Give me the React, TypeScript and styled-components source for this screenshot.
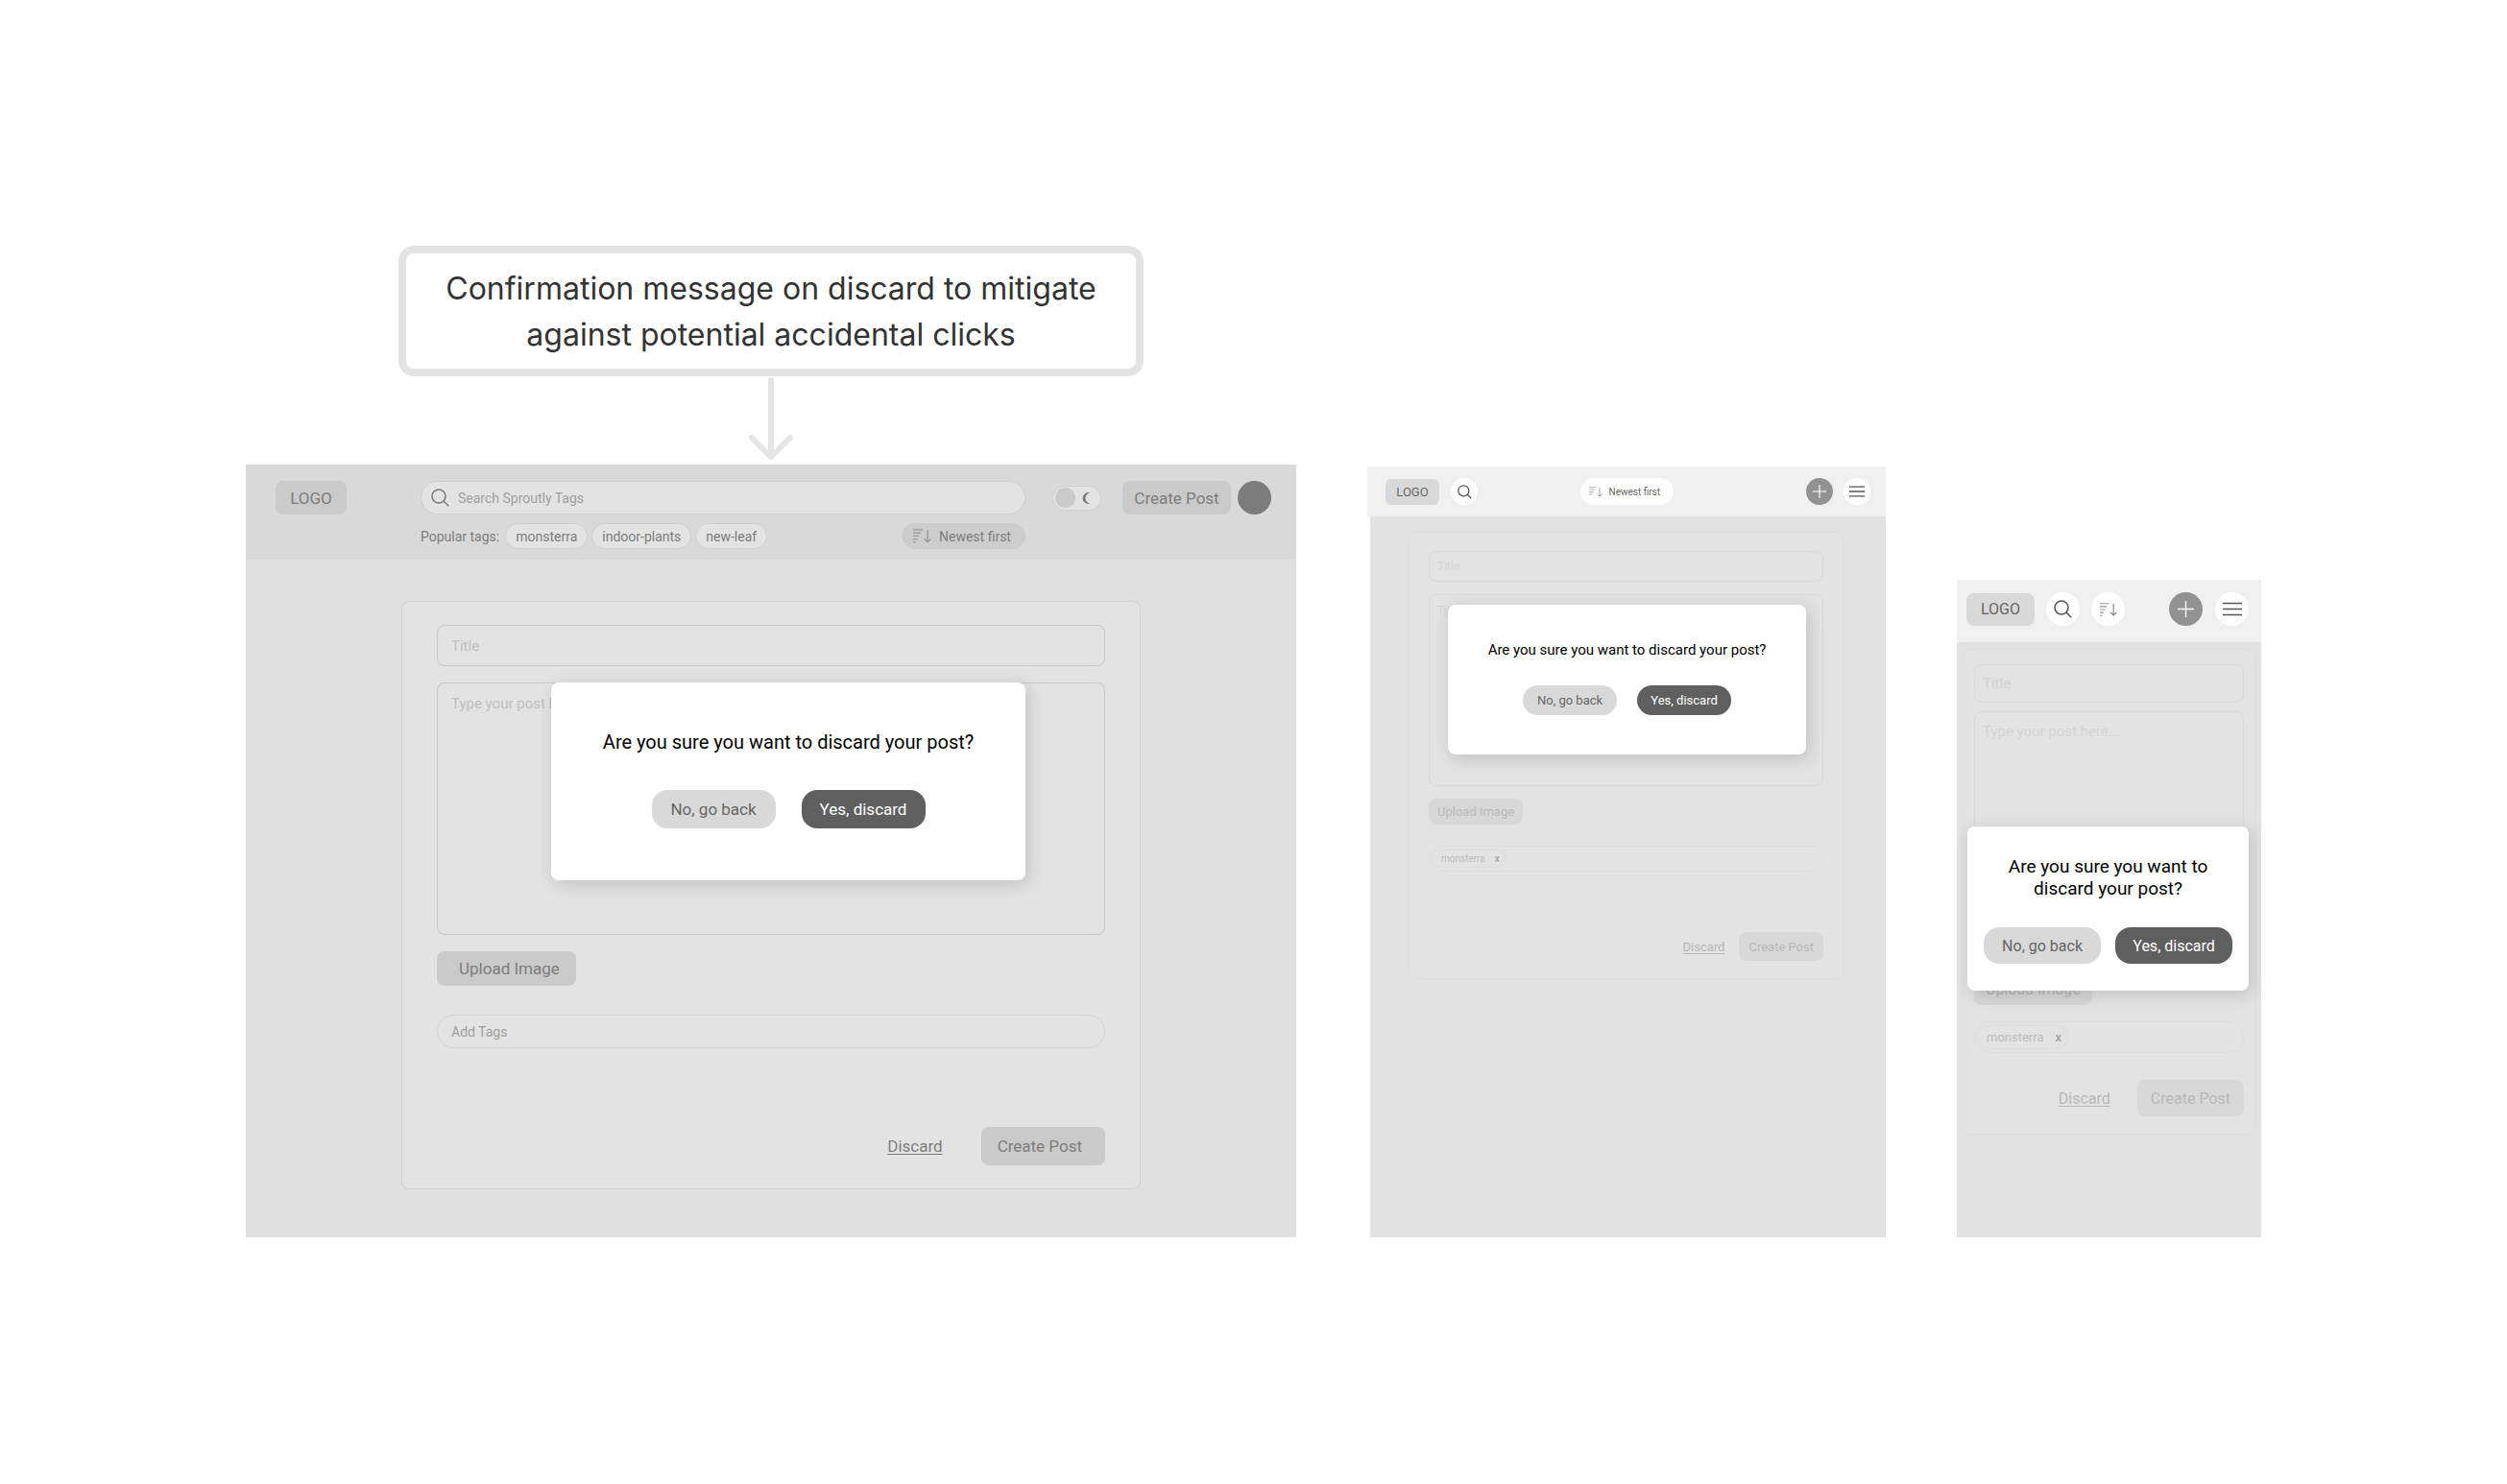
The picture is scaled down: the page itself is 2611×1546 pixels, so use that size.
import React, { useId } from 'react';
import styled, { createGlobalStyle, css, ThemeProvider } from 'styled-components';

/* ---------- theme ---------- */

const base = {
  ink: '#7d7d7d',
  hint: '#bfbfbf',
  tagHint: '#9f9f9f',
  line: '#c9c9c9',
  softLine: '#d3d3d3',
  fill: '#cacaca',
  surface: '#e3e3e3',
  page: '#e0e0e0',
};

const faded = {
  ink: '#b8b8b8',
  hint: '#d4d4d4',
  tagHint: '#bcbcbc',
  line: '#d9d9d9',
  softLine: '#dddddd',
  fill: '#d8d8d8',
  surface: '#e3e3e3',
  page: '#e2e2e2',
};

const desktop = {
  colors: base,
  body: '43px 162px 50px',
  bodyOffset: 0,
  card: '24px 36px',
  radius: 8,
  field: { height: 43, pad: 14, font: 15 },
  area: { height: 263, pad: 12, gap: 17 },
  upload: { height: 36, pad: '0 17px 0 23px', gap: 17 },
  tags: { height: 35, pad: 14, font: 14, gap: 30, chipGap: 10 },
  actions: { height: 40, gap: 82, space: 40, pad: '0 24px 0 17px' },
  button: 17,
  dialog: { top: 227, left: '29.1%', right: '25.8%', pad: '50px 0 54px', font: 20, line: 24, gap: 38, space: 27 },
  choice: { width: 129, height: 40, font: 17 },
};

const tablet = {
  colors: faded,
  body: '16px 44px 269px 40px',
  bodyOffset: 3,
  card: '19px 20px 18px',
  radius: 6,
  field: { height: 32, pad: 8, font: 12 },
  area: { height: 200, pad: 9, gap: 13 },
  upload: { height: 27, pad: '0 9px', gap: 13 },
  tags: { height: 27, pad: 2, font: 10, gap: 22, chipGap: 10 },
  actions: { height: 30, gap: 63, space: 15, pad: '0 10px' },
  button: 13,
  dialog: { top: 144, left: '15.5%', right: '15.3%', pad: '38px 0 41px', font: 15, line: 18, gap: 28, space: 21 },
  choice: { width: 98, height: 31, font: 13 },
};

const mobile = {
  colors: faded,
  body: '7px 6px 107px',
  bodyOffset: 0,
  card: '15px 11px 18px',
  radius: 8,
  field: { height: 40, pad: 8, font: 15 },
  area: { height: 263, pad: 11, gap: 9 },
  upload: { height: 34, pad: '0 12px', gap: 9 },
  tags: { height: 33, pad: 2, font: 13, gap: 17, chipGap: 12 },
  actions: { height: 38, gap: 28, space: 28, pad: '0 14px' },
  button: 16,
  dialog: { top: 257, left: '3.5%', right: '4.1%', pad: '30px 24px 28px', font: 19, line: 23, gap: 29, space: 15 },
  choice: { width: 122, height: 38, font: 16 },
};

type Device = typeof desktop;

declare module 'styled-components' {
  export interface DefaultTheme extends Device {}
}

/* ---------- board ---------- */

const GlobalStyle = createGlobalStyle`
  * { box-sizing: border-box; }
  body { margin: 0; background: #fff; font-family: Roboto, "Liberation Sans", sans-serif; }
  button, input, textarea { font-family: inherit; margin: 0; }
  button { cursor: pointer; white-space: nowrap; }
  svg { display: block; flex: none; }
`;

const Board = styled.main`
  display: grid;
  grid-template-columns: minmax(0, 1094fr) minmax(0, 540fr) minmax(0, 317fr);
  column-gap: 74px;
  align-items: end;
  padding: 256px 256px 257px;
`;

const Column = styled.div`
  display: flex;
  flex-direction: column;
  align-items: center;
`;

const Callout = styled.p`
  margin: 0;
  padding: 13px 32px 11px;
  width: 71%;
  border: 8px solid #e3e3e3;
  border-radius: 16px;
  color: #333;
  font: 400 32px/48px Inter, "Liberation Sans", sans-serif;
  text-align: center;
`;

const Arrow = styled.svg`
  margin: 1px 0 4px;
`;

const Frame = styled.section`
  position: relative;
  width: 100%;
`;

const Body = styled.div`
  margin-left: ${({ theme }) => theme.bodyOffset}px;
  padding: ${({ theme }) => theme.body};
  background: ${({ theme }) => theme.colors.page};
`;

/* ---------- headers ---------- */

const DesktopHeader = styled.header`
  display: grid;
  grid-template-columns: 151fr 630fr 256fr;
  row-gap: 9px;
  padding: 17px 26px 11px 31px;
  background: #d9d9d9;
  color: #7d7d7d;
`;

const CompactHeader = styled.header<{ $pad: string }>`
  display: grid;
  grid-template-columns: 1fr auto 1fr;
  align-items: center;
  padding: ${({ $pad }) => $pad};
  background: #f0f0f0;
  color: #666;
`;

const Group = styled.div<{ $gap: number; $end?: boolean }>`
  display: flex;
  align-items: center;
  gap: ${({ $gap }) => $gap}px;
  padding-left: ${({ theme }) => theme.bodyOffset}px;
  justify-content: ${({ $end }) => ($end ? 'flex-end' : 'flex-start')};
`;

const Logo = styled.a<{ $w: number; $h: number; $font: number; $bg: string }>`
  display: flex;
  align-items: center;
  justify-content: center;
  width: ${({ $w }) => $w}px;
  height: ${({ $h }) => $h}px;
  border-radius: ${({ theme }) => theme.radius}px;
  background: ${({ $bg }) => $bg};
  color: inherit;
  font-size: ${({ $font }) => $font}px;
  text-decoration: none;
`;

const SearchBox = styled.label`
  display: flex;
  align-items: center;
  gap: 9px;
  height: 35px;
  padding: 0 10px;
  border: 1px solid #cecece;
  border-radius: 18px;
  background: #e3e3e3;
`;

const BareInput = styled.input<{ $font: number; $hint: string }>`
  flex: 1;
  min-width: 0;
  padding: 0;
  border: 0;
  outline: 0;
  background: none;
  font-size: ${({ $font }) => $font}px;
  color: inherit;
  &::placeholder { color: ${({ $hint }) => $hint}; opacity: 1; }
`;

const TagRow = styled.div`
  grid-column: 2;
  display: flex;
  align-items: center;
  gap: 4px;
  height: 27px;
  font-size: 14px;
`;

const TagLabel = styled.span`
  margin-right: 2px;
`;

const TagPill = styled.button`
  height: 27px;
  padding: 0 10px;
  border: 1px solid #d0d0d0;
  border-radius: 14px;
  background: #e3e3e3;
  color: inherit;
  font-size: 14px;
`;

const SortPill = styled.button<{ $compact?: boolean }>`
  display: flex;
  align-items: center;
  border: 0;
  color: inherit;
  ${({ $compact }) =>
    $compact
      ? css`gap: 7px; width: 97px; height: 28px; padding: 0 9px; border-radius: 14px; background: #fff; font-size: 10px;`
      : css`gap: 8px; width: 129px; height: 27px; padding: 0 12px; margin-left: auto; border-radius: 14px; background: #cdcdcd; font-size: 14px;`}
`;

const Switch = styled.label`
  display: flex;
  align-items: center;
  gap: 7px;
  width: 51px;
  height: 26px;
  margin-right: 22px;
  padding: 0 2px;
  border: 1px solid #d0d0d0;
  border-radius: 13px;
  background: #e3e3e3;
`;

const Knob = styled.input`
  appearance: none;
  width: 21px;
  height: 21px;
  margin: 0;
  border-radius: 50%;
  background: #cacaca;
`;

const HeaderButton = styled.button`
  width: 113px;
  height: 35px;
  margin-right: 7px;
  padding: 0;
  border: 0;
  border-radius: 8px;
  background: #cacaca;
  color: inherit;
  font-size: 17px;
`;

const Avatar = styled.button`
  width: 35px;
  height: 35px;
  padding: 0;
  border: 0;
  border-radius: 50%;
  background: #7c7c7c;
`;

const Round = styled.button<{ $size: number; $dark?: boolean }>`
  display: flex;
  align-items: center;
  justify-content: center;
  width: ${({ $size }) => $size}px;
  height: ${({ $size }) => $size}px;
  padding: 0;
  border: 0;
  border-radius: 50%;
  background: ${({ $dark }) => ($dark ? '#929292' : '#fff')};
  color: ${({ $dark }) => ($dark ? '#fff' : '#555')};
`;

/* ---------- post form ---------- */

const Card = styled.form`
  display: flex;
  flex-direction: column;
  padding: ${({ theme }) => theme.card};
  border: 1px solid ${({ theme }) => theme.colors.softLine};
  border-radius: 8px;
  background: ${({ theme }) => theme.colors.surface};
`;

const fieldStyle = css`
  width: 100%;
  border: 1px solid ${({ theme }) => theme.colors.line};
  border-radius: 8px;
  outline: 0;
  background: none;
  color: ${({ theme }) => theme.colors.ink};
  font-size: ${({ theme }) => theme.field.font}px;
  &::placeholder { color: ${({ theme }) => theme.colors.hint}; opacity: 1; }
`;

const TitleInput = styled.input`
  ${fieldStyle}
  height: ${({ theme }) => theme.field.height}px;
  padding: 0 ${({ theme }) => theme.field.pad}px;
`;

const PostArea = styled.textarea`
  ${fieldStyle}
  display: block;
  height: ${({ theme }) => theme.area.height}px;
  margin-top: ${({ theme }) => theme.area.gap}px;
  padding: ${({ theme }) => theme.area.pad}px ${({ theme }) => theme.field.pad}px;
  resize: none;
`;

const FormButton = styled.button`
  border: 0;
  border-radius: 8px;
  background: ${({ theme }) => theme.colors.fill};
  color: ${({ theme }) => theme.colors.ink};
  font-size: ${({ theme }) => theme.button}px;
`;

const UploadButton = styled(FormButton)`
  align-self: flex-start;
  height: ${({ theme }) => theme.upload.height}px;
  margin-top: ${({ theme }) => theme.upload.gap}px;
  padding: ${({ theme }) => theme.upload.pad};
`;

const TagField = styled.label`
  display: flex;
  align-items: center;
  height: ${({ theme }) => theme.tags.height}px;
  margin-top: ${({ theme }) => theme.tags.gap}px;
  padding: 0 ${({ theme }) => theme.tags.pad}px;
  border: 1px solid ${({ theme }) => theme.colors.softLine};
  border-radius: 18px;
  color: ${({ theme }) => theme.colors.tagHint};
`;

const Chip = styled.span`
  display: flex;
  align-items: center;
  gap: ${({ theme }) => theme.tags.chipGap}px;
  height: calc(100% - 6px);
  padding: 0 6px 0 9px;
  border: 1px solid ${({ theme }) => theme.colors.softLine};
  border-radius: 14px;
  font-size: ${({ theme }) => theme.tags.font}px;
`;

const ChipRemove = styled.button`
  padding: 0;
  border: 0;
  background: none;
  color: #949494;
  font-size: inherit;
  line-height: 1;
`;

const Actions = styled.div`
  display: flex;
  align-items: center;
  justify-content: flex-end;
  gap: ${({ theme }) => theme.actions.space}px;
  margin-top: ${({ theme }) => theme.actions.gap}px;
`;

const DiscardLink = styled.a`
  color: ${({ theme }) => theme.colors.ink};
  font-size: ${({ theme }) => theme.button}px;
  text-underline-offset: 2px;
`;

const SubmitButton = styled(FormButton)`
  height: ${({ theme }) => theme.actions.height}px;
  padding: ${({ theme }) => theme.actions.pad};
`;

/* ---------- dialog ---------- */

const Dialog = styled.div`
  position: absolute;
  top: ${({ theme }) => theme.dialog.top}px;
  left: ${({ theme }) => theme.dialog.left};
  right: ${({ theme }) => theme.dialog.right};
  padding: ${({ theme }) => theme.dialog.pad};
  border-radius: 8px;
  background: #fff;
  box-shadow: 3px 4px 18px rgba(0, 0, 0, 0.16);
  text-align: center;
`;

const Question = styled.h2`
  margin: 0;
  color: #000;
  font-weight: 400;
  font-size: ${({ theme }) => theme.dialog.font}px;
  line-height: ${({ theme }) => theme.dialog.line}px;
`;

const Choices = styled.div`
  display: flex;
  justify-content: center;
  gap: ${({ theme }) => theme.dialog.space}px;
  margin: ${({ theme }) => theme.dialog.gap}px -24px 0;
`;

const Choice = styled.button<{ $dark?: boolean }>`
  width: ${({ theme }) => theme.choice.width}px;
  height: ${({ theme }) => theme.choice.height}px;
  padding: 0;
  border: 0;
  border-radius: 16px;
  background: ${({ $dark }) => ($dark ? '#5f5f5f' : '#d9d9d9')};
  color: ${({ $dark }) => ($dark ? '#fff' : '#666')};
  font-size: ${({ theme }) => theme.choice.font}px;
`;

/* ---------- icons ---------- */

const SearchIcon = ({ size }: { size: number }) => (
  <svg width={size} height={size} viewBox="0 0 19 19" fill="none" stroke="currentColor" strokeWidth="1.6">
    <circle cx="8" cy="8" r="7" />
    <path d="M13 13l5.2 5.2" />
  </svg>
);

const SortIcon = ({ size }: { size: number }) => (
  <svg width={size} height={(size * 14) / 18} viewBox="0 0 18 14" fill="none" stroke="currentColor">
    <path d="M0 .8h9.5M0 3.9h7.3M0 7h5.8M0 10.1h4.2M0 13.2h2.8" strokeWidth="1.1" opacity=".6" />
    <path d="M14.2 1v12M11 9.8l3.2 3.2 3.2-3.2" strokeWidth="1.1" opacity=".75" />
  </svg>
);

const MoonIcon = () => (
  <svg width="9" height="12" viewBox="0 0 9 12" fill="#777">
    <path d="M8.4 .4A6 6 0 0 0 .5 6a6 6 0 0 0 7.9 5.6A5.65 5.65 0 0 1 8.4 .4Z" />
  </svg>
);

const PlusIcon = ({ size }: { size: number }) => (
  <svg width={size} height={size} viewBox="0 0 18 18" stroke="currentColor" strokeWidth="1.4">
    <path d="M9 0v18M0 9h18" />
  </svg>
);

const MenuIcon = ({ size }: { size: number }) => (
  <svg width={size} height={(size * 15) / 20} viewBox="0 0 20 15" stroke="currentColor" strokeWidth="1.6">
    <path d="M0 1.5h20M0 7.5h20M0 13.5h20" />
  </svg>
);

/* ---------- shared parts ---------- */

const PostForm = ({ tag }: { tag?: string }) => {
  const id = useId();
  return (
    <Card onSubmit={(e) => e.preventDefault()}>
      <TitleInput id={`${id}-title`} aria-label="Title" placeholder="Title" />
      <PostArea id={`${id}-post`} aria-label="Post" placeholder="Type your post here..." />
      <UploadButton type="button">Upload Image</UploadButton>
      <TagField htmlFor={`${id}-tags`}>
        {tag && (
          <Chip>
            {tag}
            <ChipRemove type="button" aria-label={`Remove ${tag}`}>x</ChipRemove>
          </Chip>
        )}
        <BareInput
          id={`${id}-tags`}
          aria-label="Add Tags"
          placeholder={tag ? undefined : 'Add Tags'}
          $font={14}
          $hint="#9f9f9f"
        />
      </TagField>
      <Actions>
        <DiscardLink href="#discard">Discard</DiscardLink>
        <SubmitButton type="submit">Create Post</SubmitButton>
      </Actions>
    </Card>
  );
};

const DiscardDialog = () => {
  const id = useId();
  return (
    <Dialog role="dialog" aria-labelledby={id}>
      <Question id={id}>Are you sure you want to discard your post?</Question>
      <Choices>
        <Choice type="button">No, go back</Choice>
        <Choice type="button" $dark>Yes, discard</Choice>
      </Choices>
    </Dialog>
  );
};

/* ---------- screens ---------- */

const DesktopScreen = () => (
  <ThemeProvider theme={desktop}>
    <Frame>
      <DesktopHeader>
        <Logo href="#home" $w={74} $h={35} $font={17} $bg="#cacaca">LOGO</Logo>
        <SearchBox>
          <SearchIcon size={19} />
          <BareInput type="text" aria-label="Search" placeholder="Search Sproutly Tags" $font={14} $hint="#9f9f9f" />
        </SearchBox>
        <Group $gap={0} $end>
          <Switch>
            <Knob type="checkbox" aria-label="Dark mode" />
            <MoonIcon />
          </Switch>
          <HeaderButton type="button">Create Post</HeaderButton>
          <Avatar type="button" aria-label="Account" />
        </Group>
        <TagRow>
          <TagLabel>Popular tags:</TagLabel>
          {['monsterra', 'indoor-plants', 'new-leaf'].map((tag) => (
            <TagPill key={tag} type="button">{tag}</TagPill>
          ))}
          <SortPill type="button">
            <SortIcon size={19} />
            Newest first
          </SortPill>
        </TagRow>
      </DesktopHeader>
      <Body>
        <PostForm />
      </Body>
      <DiscardDialog />
    </Frame>
  </ThemeProvider>
);

const TabletScreen = () => (
  <ThemeProvider theme={tablet}>
    <Frame>
      <CompactHeader $pad="12px 16px">
        <Group $gap={12}>
          <Logo href="#home" $w={56} $h={27} $font={13} $bg="#d9d9d9">LOGO</Logo>
          <Round type="button" aria-label="Search" $size={28}><SearchIcon size={15} /></Round>
        </Group>
        <SortPill type="button" $compact>
          <SortIcon size={14} />
          Newest first
        </SortPill>
        <Group $gap={11} $end>
          <Round type="button" aria-label="Create post" $size={28} $dark><PlusIcon size={14} /></Round>
          <Round type="button" aria-label="Menu" $size={28}><MenuIcon size={16} /></Round>
        </Group>
      </CompactHeader>
      <Body>
        <PostForm tag="monsterra" />
      </Body>
      <DiscardDialog />
    </Frame>
  </ThemeProvider>
);

const MobileScreen = () => (
  <ThemeProvider theme={mobile}>
    <Frame>
      <CompactHeader $pad="13px 13px 17px 10px">
        <Group $gap={12}>
          <Logo href="#home" $w={71} $h={34} $font={16} $bg="#d9d9d9">LOGO</Logo>
          <Round type="button" aria-label="Search" $size={35}><SearchIcon size={19} /></Round>
          <Round type="button" aria-label="Sort" $size={35}><SortIcon size={18} /></Round>
        </Group>
        <span />
        <Group $gap={13} $end>
          <Round type="button" aria-label="Create post" $size={35} $dark><PlusIcon size={17} /></Round>
          <Round type="button" aria-label="Menu" $size={35}><MenuIcon size={20} /></Round>
        </Group>
      </CompactHeader>
      <Body>
        <PostForm tag="monsterra" />
      </Body>
      <DiscardDialog />
    </Frame>
  </ThemeProvider>
);

export default function App() {
  return (
    <>
      <GlobalStyle />
      <Board>
        <Column>
          <Callout>Confirmation message on discard to mitigate against potential accidental clicks</Callout>
          <Arrow width="46" height="87" viewBox="0 0 46 87" fill="none" stroke="#e5e5e5" strokeWidth="6" strokeLinecap="round" strokeLinejoin="round">
            <path d="M23 3v80M3 63l20 20 20-20" />
          </Arrow>
          <DesktopScreen />
        </Column>
        <TabletScreen />
        <MobileScreen />
      </Board>
    </>
  );
}
